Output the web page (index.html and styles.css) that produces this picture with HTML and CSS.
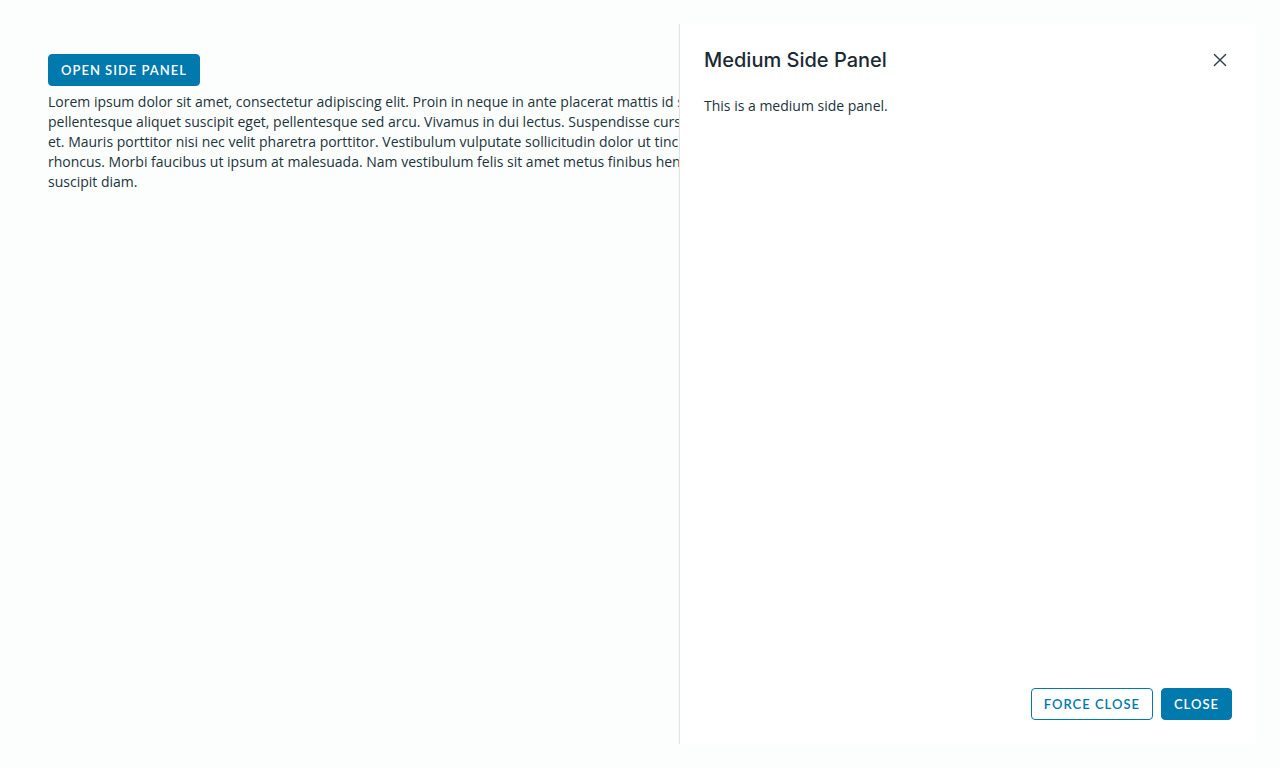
FILE: index.html
```html
<!DOCTYPE html>
<html lang="en">
<head>
<meta charset="utf-8">
<title>Side Panel</title>
<link rel="stylesheet" href="styles.css">
</head>
<body>
<div class="frame">
  <main class="content">
    <button type="button" class="btn btn-primary">Open side panel</button>
    <p class="copy">Lorem ipsum dolor sit amet, consectetur adipiscing elit. Proin in neque in ante placerat mattis id sed<br>
    pellentesque aliquet suscipit eget, pellentesque sed arcu. Vivamus in dui lectus. Suspendisse cursus<br>
    et. Mauris porttitor nisi nec velit pharetra porttitor. Vestibulum vulputate sollicitudin dolor ut tincidunt<br>
    rhoncus. Morbi faucibus ut ipsum at malesuada. Nam vestibulum felis sit amet metus finibus hendrerit<br>
    suscipit diam.</p>
  </main>
  <aside class="panel" role="dialog" aria-labelledby="panel-title">
    <header class="panel-header">
      <h3 class="panel-title" id="panel-title">Medium Side Panel</h3>
      <button type="button" class="panel-close" aria-label="Close side panel">
        <svg width="24" height="24" viewBox="0 0 24 24" fill="none" stroke="currentColor" stroke-width="1.4" stroke-linecap="round"><path d="M6.4 6.4 17.6 17.6M17.6 6.4 6.4 17.6"/></svg>
      </button>
    </header>
    <div class="panel-body">This is a medium side panel.</div>
    <footer class="panel-footer">
      <button type="button" class="btn">Force close</button>
      <button type="button" class="btn btn-primary">Close</button>
    </footer>
  </aside>
</div>
</body>
</html>
```

FILE: styles.css
```css
* { box-sizing: border-box; }
body {
  margin: 0;
  background: #fcfefd;
  color: #21333b;
  font: 14px/20px Metropolis, "Open Sans", "Noto Sans", sans-serif;
}
.frame {
  display: flex;
  min-height: 100vh;
  padding: 24px;
  position: relative;
  overflow: hidden;
}
.content { flex: 1; min-width: 0; padding: 30px 24px 24px; }
.copy { margin: 6px 0 0; white-space: nowrap; }
.btn {
  height: 32px;
  padding: 0 12px;
  border: 1px solid #0079ad;
  border-radius: 4px;
  background: transparent;
  color: #0079ad;
  font: 600 13px/20px Metropolis, Lato, "Open Sans", sans-serif;
  letter-spacing: 1px;
  text-transform: uppercase;
}
.btn-primary { background: #0079ad; color: #fff; }
.panel {
  position: absolute;
  top: 24px;
  right: 24px;
  bottom: 24px;
  width: 45%;
  padding: 24px;
  display: flex;
  flex-direction: column;
  background: #fff;
  box-shadow: -1px 0 1px #dfe4e6;
  clip-path: inset(0 0 0 -4px);
}
.panel-header { display: flex; align-items: center; justify-content: space-between; }
.panel-title {
  margin: 0;
  color: #1b2a32;
  font: 500 20px/24px Metropolis, Inter, "Open Sans", sans-serif;
}
.panel-close {
  display: flex;
  padding: 0;
  border: 0;
  background: none;
  color: #2d4048;
}
.panel-body { flex: 1; padding-top: 24px; }
.panel-footer { display: flex; justify-content: flex-end; gap: 8px; }
```
